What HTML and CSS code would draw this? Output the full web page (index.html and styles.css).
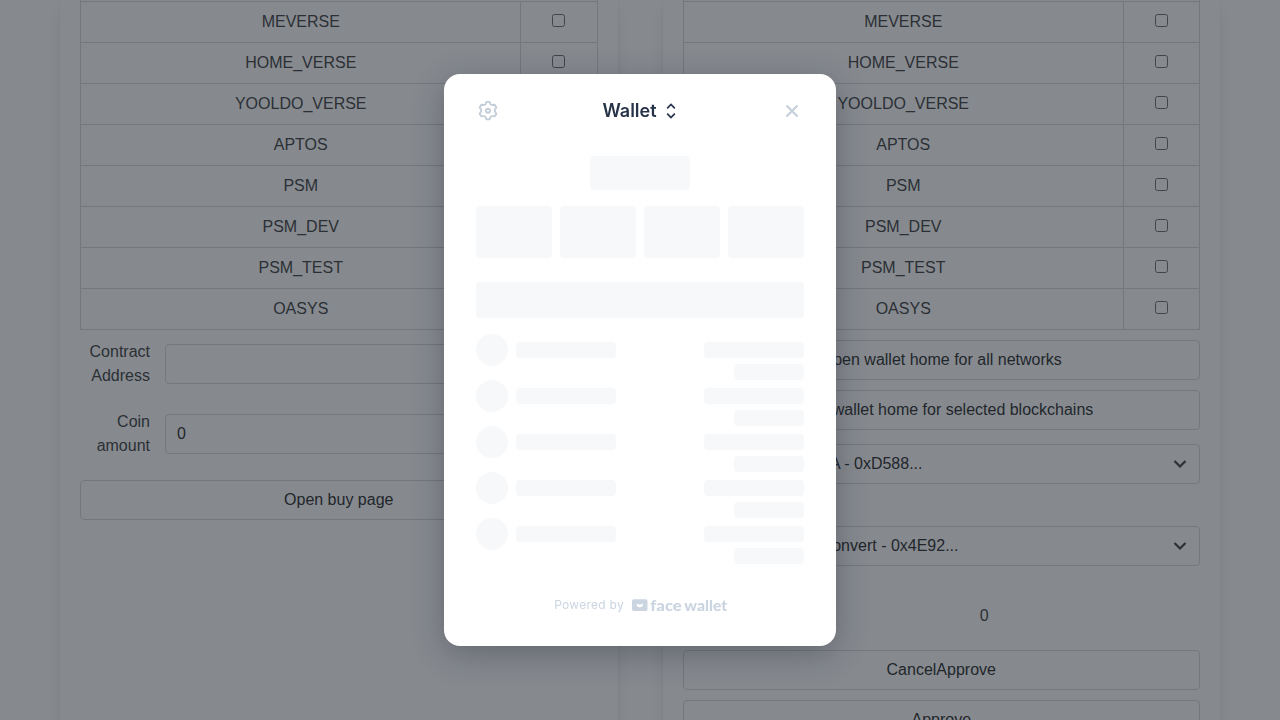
FILE: index.html
```
<!DOCTYPE html>
<html lang="en">
<head>
<meta charset="utf-8">
<title>Wallet</title>
<link rel="stylesheet" href="styles.css">
</head>
<body>
<main class="page">
  <section class="card">
    <div class="table">
      <div class="row"></div>
      <div class="row"><span>MEVERSE</span><label><input type="checkbox"></label></div>
      <div class="row"><span>HOME_VERSE</span><label><input type="checkbox"></label></div>
      <div class="row"><span>YOOLDO_VERSE</span><label><input type="checkbox"></label></div>
      <div class="row"><span>APTOS</span><label><input type="checkbox"></label></div>
      <div class="row"><span>PSM</span><label><input type="checkbox"></label></div>
      <div class="row"><span>PSM_DEV</span><label><input type="checkbox"></label></div>
      <div class="row"><span>PSM_TEST</span><label><input type="checkbox"></label></div>
      <div class="row"><span>OASYS</span><label><input type="checkbox"></label></div>
    </div>
    <div class="field"><div class="field-label">Contract Address</div><input class="control" type="text"></div>
    <div class="field"><div class="field-label">Coin amount</div><input class="control" type="text" value="0"></div>
    <button class="button buy">Open buy page</button>
  </section>
  <section class="card">
    <div class="table narrow">
      <div class="row"></div>
      <div class="row"><span>MEVERSE</span><label><input type="checkbox"></label></div>
      <div class="row"><span>HOME_VERSE</span><label><input type="checkbox"></label></div>
      <div class="row"><span>YOOLDO_VERSE</span><label><input type="checkbox"></label></div>
      <div class="row"><span>APTOS</span><label><input type="checkbox"></label></div>
      <div class="row"><span>PSM</span><label><input type="checkbox"></label></div>
      <div class="row"><span>PSM_DEV</span><label><input type="checkbox"></label></div>
      <div class="row"><span>PSM_TEST</span><label><input type="checkbox"></label></div>
      <div class="row"><span>OASYS</span><label><input type="checkbox"></label></div>
    </div>
    <div class="stack">
      <button class="button">Open wallet home for all networks</button>
      <button class="button">Open wallet home for selected blockchains</button>
    </div>
    <div class="select first"><span class="option token">A - 0xD588...</span><svg width="14" height="9" viewBox="0 0 14 9"><path d="M1.500 1 7 6.500 12.500 1"/></svg></div>
    <div class="select second"><span class="option convert">Convert - 0x4E92...</span><svg width="14" height="9" viewBox="0 0 14 9"><path d="M1.500 1 7 6.500 12.500 1"/></svg></div>
    <div class="amount">0</div>
    <div class="stack">
      <button class="button">CancelApprove</button>
      <button class="button">Approve</button>
    </div>
  </section>
</main>
<div class="overlay">
  <div class="modal">
    <header class="modal-head">
      <svg class="gear" width="24" height="24" viewBox="0 0 24 24"><path d="M10.500 2.900h3l.8 1.900c.4.900 1.200 1.300 2.200 1.200l2.200-.3 1.700 2.700-1.300 1.800c-.6.900-.6 1.800 0 2.700l1.300 1.800-1.700 2.700-2.200-.3c-1-.1-1.800.3-2.200 1.200l-.8 2.100h-3l-.8-2.100c-.4-.9-1.200-1.300-2.200-1.200l-2.200.3-1.700-2.700 1.300-1.800c.6-.9.600-1.800 0-2.700L3.600 8.400l1.700-2.700 2.200.3c1 .1 1.800-.3 2.200-1.200Z"/><circle cx="12" cy="11.800" r="2"/></svg>
      <h1 class="title">Wallet<svg width="12" height="18" viewBox="0 0 12 18"><path d="M2.200 6.300 6 2.500l3.800 3.800M2.200 11.700 6 15.500l3.800-3.800"/></svg></h1>
      <svg class="close" width="24" height="24" viewBox="0 0 24 24"><path d="m6.500 6.500 11 11m0-11-11 11"/></svg>
    </header>
    <div class="bone network"></div>
    <div class="tiles"><div class="bone"></div><div class="bone"></div><div class="bone"></div><div class="bone"></div></div>
    <div class="bone tabs"></div>
    <div class="coins">
      <div class="coin"><i class="bone dot"></i><i class="bone name"></i><div class="values"><i class="bone"></i><i class="bone small"></i></div></div>
      <div class="coin"><i class="bone dot"></i><i class="bone name"></i><div class="values"><i class="bone"></i><i class="bone small"></i></div></div>
      <div class="coin"><i class="bone dot"></i><i class="bone name"></i><div class="values"><i class="bone"></i><i class="bone small"></i></div></div>
      <div class="coin"><i class="bone dot"></i><i class="bone name"></i><div class="values"><i class="bone"></i><i class="bone small"></i></div></div>
      <div class="coin"><i class="bone dot"></i><i class="bone name"></i><div class="values"><i class="bone"></i><i class="bone small"></i></div></div>
    </div>
    <footer class="powered">
      <span class="by">Powered by</span>
      <svg class="logo" width="96" height="16" viewBox="0 0 96 16"><rect y="2.200" width="15.500" height="11.800" rx="1.800" fill="#cbd5e1"/><path d="M4.600 7h1.800q1.400 1.200 2.800 0H11a3.200 3.200 0 0 1-6.400 0Z" fill="#fff"/><text class="brand" x="18.300" y="13.500" textLength="31.500" lengthAdjust="spacingAndGlyphs">face</text><text class="brand" x="52.300" y="13.500" textLength="43" lengthAdjust="spacingAndGlyphs">wallet</text></svg>
    </footer>
  </div>
</div>
</body>
</html>
```
FILE: styles.css
```
* { box-sizing: border-box; }
body {
  margin: 0;
  height: 720px;
  overflow: hidden;
  background: #fff;
  color: #4a4a4a;
  font: 16px/24px "Liberation Sans", sans-serif;
}
.page {
  display: grid;
  grid-template-columns: 1fr 1fr;
  gap: 45px;
  height: 720px;
  padding: 0 60px;
  overflow: hidden;
}
.card {
  height: 780px;
  padding: 0 20px;
  box-shadow: 0 8px 16px -2px rgba(10, 10, 10, .1), 0 0 0 1px rgba(10, 10, 10, .02);
}
.table {
  margin-top: -39px;
  border: solid #dbdbdb;
  border-width: 0 1px;
}
.row {
  display: grid;
  grid-template-columns: 1fr 77px;
  height: 41px;
  border-bottom: 1px solid #dbdbdb;
  text-align: center;
  line-height: 40px;
}
.narrow .row { grid-template-columns: 1fr 76px; }
.row span { padding-left: 1px; }
.narrow .row span { padding-left: 0; }
.row label {
  display: flex;
  justify-content: center;
  align-items: center;
  padding-bottom: 3px;
  border-left: 1px solid #dbdbdb;
}
.row input { width: 13px; height: 13px; margin: 0; }
.field {
  display: flex;
  gap: 15px;
  margin-top: 10px;
  height: 60px;
}
.field-label { width: 70px; text-align: right; }
.control {
  flex: 1;
  min-width: 0;
  height: 40px;
  margin-top: 4px;
  padding: 0 11px;
  border: 1px solid #dbdbdb;
  border-radius: 4px;
  background: none;
  color: #363636;
  font: inherit;
}
.button {
  display: block;
  width: 100%;
  height: 40px;
  border: 1px solid #dbdbdb;
  border-radius: 4px;
  background: none;
  color: #363636;
  font: inherit;
}
.buy { margin-top: 10px; }
.stack {
  display: flex;
  flex-direction: column;
  gap: 10px;
  margin-top: 10px;
}
.select {
  display: flex;
  justify-content: space-between;
  align-items: center;
  height: 40px;
  padding: 0 12px 0 11px;
  border: 1px solid #dbdbdb;
  border-radius: 4px;
  color: #363636;
}
.first { margin-top: 14px; }
.second { margin-top: 42px; }
.select svg { fill: none; stroke: #4a4a4a; stroke-width: 2.200; }
.option { text-align: right; }
.token { width: 228px; }
.convert { width: 264px; }
.amount {
  margin: 38px 0 22px 86px;
  text-align: center;
}
.overlay {
  position: fixed;
  inset: 0;
  display: flex;
  justify-content: center;
  align-items: center;
  background: rgba(13, 21, 31, .5);
}
.modal {
  width: 392px;
  height: 572px;
  padding: 25px 32px 0;
  border-radius: 16px;
  background: #fff;
  box-shadow: 0 8px 32px rgba(27, 30, 48, .32);
}
.modal-head {
  display: flex;
  justify-content: space-between;
  align-items: center;
  height: 24px;
}
.gear, .close { fill: none; stroke: #c3ced9; stroke-width: 1.900; stroke-linejoin: round; }
.title {
  display: flex;
  align-items: center;
  gap: 8px;
  margin: 0 1px 0 0;
  color: #263248;
  font: 600 18px/24px Inter, sans-serif;
  font-optical-sizing: none;
}
.title svg { fill: none; stroke: #263248; stroke-width: 1.700; }
.bone { display: block; border-radius: 4px; background: #f7f8fa; }
.network { width: 100px; height: 34px; margin: 33px auto 16px; }
.tiles {
  display: grid;
  grid-template-columns: repeat(4, 1fr);
  gap: 8px;
  height: 52px;
}
.tabs { height: 36px; margin: 24px 0 16px; }
.coins { height: 230px; }
.coin { display: flex; gap: 8px; height: 46px; }
.dot { width: 32px; height: 32px; border-radius: 50%; }
.name { width: 100px; height: 16px; margin-top: 8px; }
.values {
  display: flex;
  flex-direction: column;
  align-items: flex-end;
  gap: 6px;
  margin: 8px 0 0 auto;
}
.values .bone { width: 100px; height: 16px; }
.values .small { width: 70px; }
.powered {
  display: flex;
  justify-content: flex-end;
  align-items: center;
  gap: 8px;
  height: 16px;
  margin: 33px 76px 0 0;
}
.by {
  color: #cbd5e1;
  font: 12px/16px Inter, sans-serif;
  letter-spacing: .28px;
}
.logo { overflow: visible; }
.brand { fill: #cbd5e1; font: 900 15.500px Lato, sans-serif; }
```
